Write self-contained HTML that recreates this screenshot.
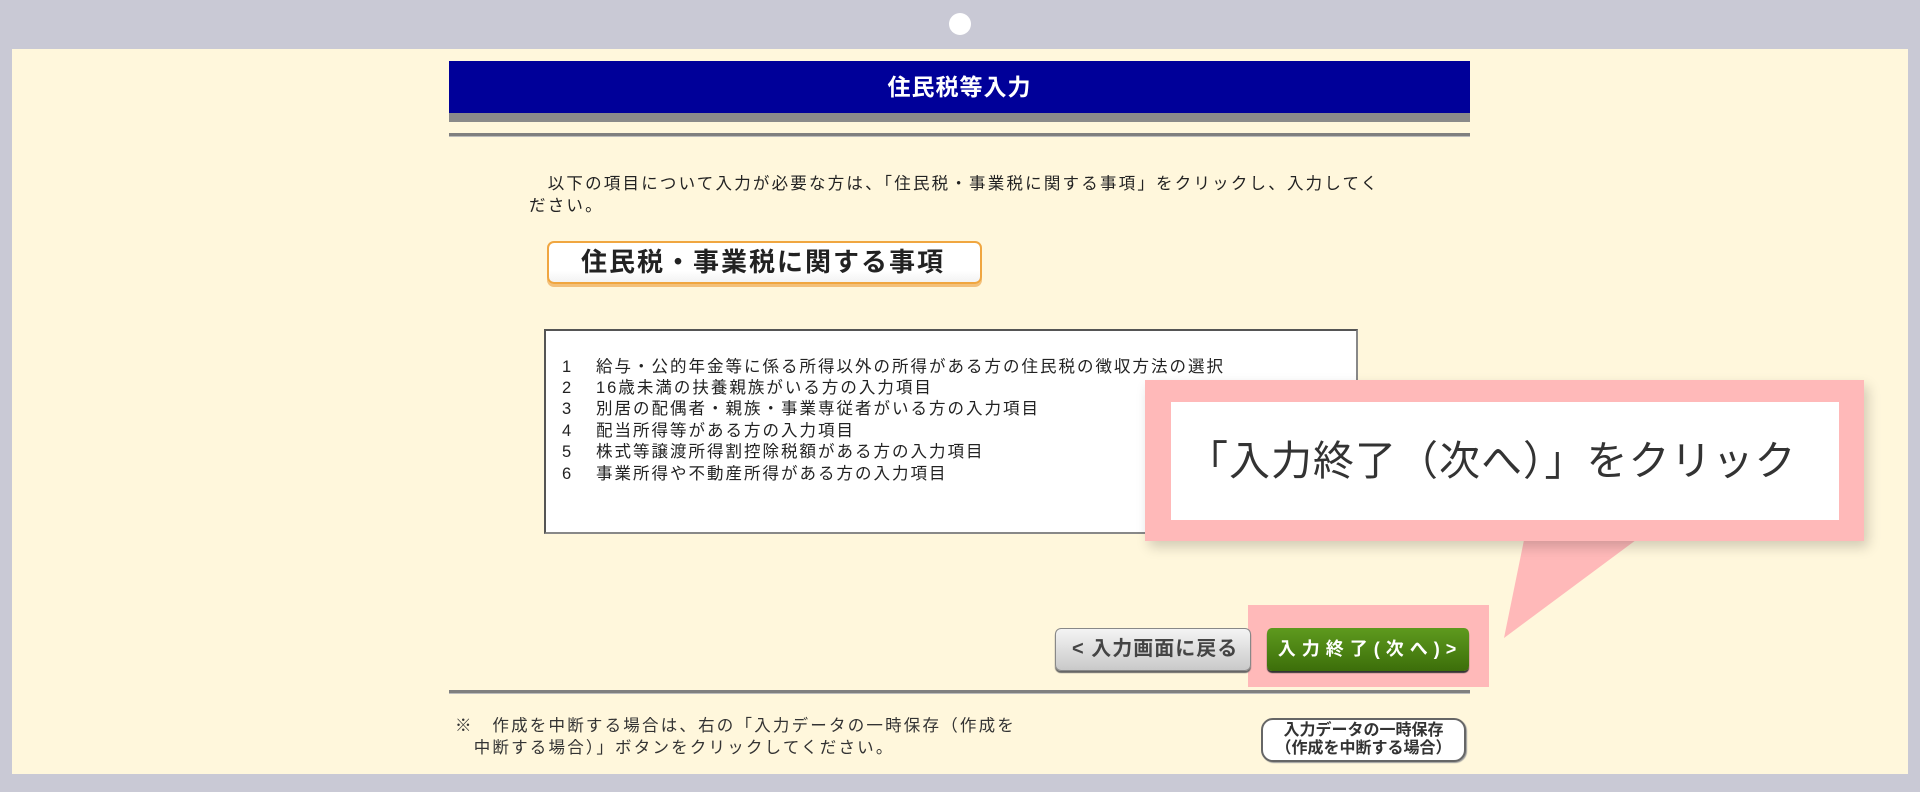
<!DOCTYPE html>
<html><head><meta charset="utf-8"><style>
*{margin:0;padding:0;box-sizing:border-box}
body{width:1920px;height:792px;background:#c9c9d5;position:relative;overflow:hidden;font-family:"Liberation Sans","Noto Sans CJK JP",sans-serif;color:#222}
.a{position:absolute}
#cream{left:12px;top:49px;width:1896px;height:725px;background:#fff7dc}
#dot{left:949px;top:13px;width:22px;height:22px;border-radius:50%;background:#fff}
#hd{left:449px;top:61px;width:1021px;height:52px;background:#000099;color:#fff;font-weight:bold;font-size:23px;text-align:center;line-height:52px;letter-spacing:1px}
#hg{left:449px;top:113px;width:1021px;height:9px;background:#8a8a8a}
.ln{left:449px;width:1021px;height:4px;background:#7f7f7f;border-bottom:1px solid #bbb}
.t{font-size:16.5px;line-height:22px;white-space:nowrap;letter-spacing:2.2px}
#ob{left:547px;top:241px;width:435px;height:43px;border:2px solid #f0a640;border-radius:7px;background:linear-gradient(#fff,#fff 70%,#f3f3f3);box-shadow:0 3px 0 #f3c07a;font-weight:bold;font-size:26px;line-height:38px;padding-left:32px;letter-spacing:2px}
#box{left:544px;top:329px;width:814px;height:205px;border:2px solid #555;border-right-color:#888;border-bottom-color:#888;background:#fff}
.li{left:562px;font-size:16.5px;white-space:nowrap;letter-spacing:2px}
.li span{display:inline-block;width:34px;letter-spacing:0}
#pk{left:1248px;top:605px;width:241px;height:82px;background:#ffb9b9}
#back{left:1055px;top:628px;width:196px;height:43px;border-radius:6px;border:1px solid #888;background:linear-gradient(#f4f4f4,#c9c9c9);box-shadow:0 2px 1px #666;font-weight:bold;font-size:20px;line-height:41px;padding-left:16px;color:#444;white-space:nowrap;letter-spacing:1px}
#next{left:1267px;top:628px;width:202px;height:43px;border-radius:5px;background:linear-gradient(#5e9a1e,#3c6e0a);box-shadow:0 2px 1px #333;color:#fff;font-weight:bold;font-size:18px;line-height:43px;text-align:center;letter-spacing:6px;white-space:nowrap;padding-left:4px}
#save{left:1261px;top:718px;width:205px;height:44px;border:2px solid #666;border-radius:12px;background:#fff;font-weight:bold;font-size:16px;line-height:18px;text-align:center;color:#333;padding-top:2px;box-shadow:1px 1px 1px #999;white-space:nowrap}
#cb{left:1145px;top:380px;width:719px;height:161px;background:#ffb9b9;box-shadow:4px 6px 12px rgba(0,0,0,.18)}
#cw{left:1171px;top:402px;width:668px;height:118px;background:#fff;font-size:41px;line-height:118px;color:#333;padding-left:16px;white-space:nowrap;letter-spacing:1px}
</style></head><body>
<div class="a" id="dot"></div>
<div class="a" id="cream"></div>
<div class="a" id="hd">住民税等入力</div>
<div class="a" id="hg"></div>
<div class="a ln" style="top:133px"></div>
<div class="a t" style="left:529px;top:173px">　以下の項目について入力が必要な方は、「住民税・事業税に関する事項」をクリックし、入力してく<br>ださい。</div>
<div class="a" id="ob">住民税・事業税に関する事項</div>
<div class="a" id="box"></div>
<div class="a li" style="top:353px"><span>1</span>給与・公的年金等に係る所得以外の所得がある方の住民税の徴収方法の選択</div>
<div class="a li" style="top:374px"><span>2</span>16歳未満の扶養親族がいる方の入力項目</div>
<div class="a li" style="top:395px"><span>3</span>別居の配偶者・親族・事業専従者がいる方の入力項目</div>
<div class="a li" style="top:417px"><span>4</span>配当所得等がある方の入力項目</div>
<div class="a li" style="top:438px"><span>5</span>株式等譲渡所得割控除税額がある方の入力項目</div>
<div class="a li" style="top:460px"><span>6</span>事業所得や不動産所得がある方の入力項目</div>
<div class="a" id="pk"></div>
<div class="a" id="back">&lt; 入力画面に戻る</div>
<div class="a" id="next">入力終了(次へ)&gt;</div>
<div class="a ln" style="top:690px"></div>
<div class="a t" style="left:455px;top:715px;color:#333">※　作成を中断する場合は、右の「入力データの一時保存（作成を<br>　中断する場合）」ボタンをクリックしてください。</div>
<div class="a" id="save">入力データの一時保存<br>（作成を中断する場合）</div>
<svg class="a" style="left:0;top:0" width="1920" height="792"><polygon points="1524,540 1636,540 1504,638" fill="#ffb9b9"/></svg>
<div class="a" id="cb"></div>
<div class="a" id="cw">「入力終了（次へ）」をクリック</div>
</body></html>
